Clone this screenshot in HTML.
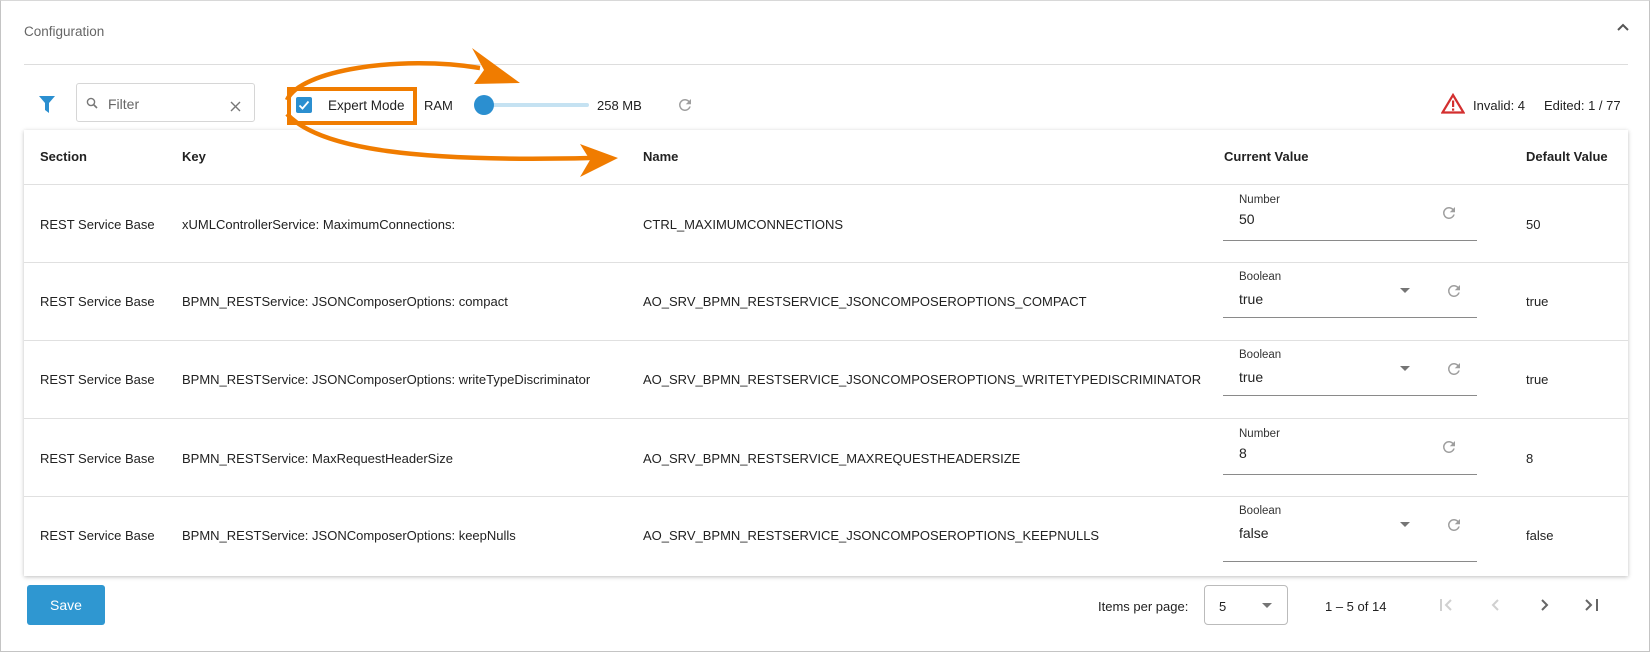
<!DOCTYPE html>
<html><head><meta charset="utf-8"><style>
*{margin:0;padding:0;box-sizing:border-box}
body{width:1650px;height:652px;background:#fff;font-family:"Liberation Sans",Arial,sans-serif;color:#222;font-size:13px;position:relative;overflow:hidden}
.frame{position:absolute;left:0;top:0;width:1650px;height:652px;border:1px solid #c4c4c4;border-top-color:#d8d8d8}
.a{position:absolute;white-space:nowrap}
.card{position:absolute;left:24px;top:130px;width:1604px;height:446px;background:#fff;box-shadow:0 1px 4px rgba(0,0,0,.25)}
.hl{position:absolute;left:24px;width:1604px;height:1px;background:#e0e0e0}
.th{font-weight:bold;top:149px}
.lbl{font-size:11.5px;color:#333}
.ul{position:absolute;left:1223px;width:254px;height:1px;background:#8a8a8a}
.tri{position:absolute;width:0;height:0;border-left:5px solid transparent;border-right:5px solid transparent;border-top:5px solid #757575}
</style></head><body>
<div class="frame"></div>
<div class="a" style="left:24px;top:24px;color:#666;font-size:13.5px">Configuration</div>
<svg class="a" style="left:1616px;top:22px" width="14" height="10"><path d="M2 8 L7 3 L12 8" stroke="#555" stroke-width="2" fill="none"/></svg>
<div class="hl" style="top:64px;background:#ddd"></div>

<svg class="a" style="left:39px;top:96px" width="16" height="17"><path d="M0 0 H16 L10 7 V17 L6 14 V7 Z" fill="#2b8fd0"/></svg>
<div class="a" style="left:76px;top:83px;width:179px;height:39px;border:1px solid #d6d6d6;border-radius:3px"></div>
<svg class="a" style="left:86px;top:97px" width="12" height="12"><circle cx="5" cy="5" r="3.6" stroke="#777" stroke-width="1.4" fill="none"/><path d="M7.5 7.5 L11 11" stroke="#777" stroke-width="1.6"/></svg>
<div class="a" style="left:108px;top:96px;color:#666;font-size:14px">Filter</div>
<svg class="a" style="left:230px;top:101px" width="11" height="11"><path d="M1 1L10 10M10 1L1 10" stroke="#777" stroke-width="1.4"/></svg>

<div class="a" style="left:287px;top:87px;width:130px;height:38px;border:4px solid #f07c00"></div>
<div class="a" style="left:296px;top:97px;width:16px;height:16px;background:#2b8fd0;border-radius:2px"></div>
<svg class="a" style="left:296px;top:97px" width="16" height="16"><path d="M3.5 8.5 L6.5 11.5 L12.5 4.5" stroke="#fff" stroke-width="1.8" fill="none"/></svg>
<div class="a" style="left:328px;top:98px;font-size:13.5px">Expert Mode</div>
<div class="a" style="left:424px;top:98px">RAM</div>
<div class="a" style="left:484px;top:103px;width:105px;height:4px;background:#c5e2f2;border-radius:2px"></div>
<div class="a" style="left:474px;top:95px;width:20px;height:20px;background:#2b8fd0;border-radius:50%"></div>
<div class="a" style="left:597px;top:98px">258 MB</div>
<svg class="a" style="left:676px;top:96px" width="18" height="18" viewBox="0 0 24 24"><path d="M17.65 6.35A7.96 7.96 0 0 0 12 4a8 8 0 1 0 7.73 10h-2.08A6 6 0 1 1 12 6c1.66 0 3.14.69 4.22 1.78L13 11h7V4z" fill="#9e9e9e"/></svg>

<svg class="a" style="left:1441px;top:93px" width="24" height="21"><path d="M12 2 L22.5 19.5 H1.5 Z" stroke="#d32f2f" stroke-width="2.2" fill="none"/><rect x="11" y="7.5" width="2.2" height="6.5" fill="#d32f2f"/><rect x="11" y="15.5" width="2.2" height="2.2" fill="#d32f2f"/></svg>
<div class="a" style="left:1473px;top:98px">Invalid: 4</div>
<div class="a" style="left:1544px;top:98px">Edited: 1 / 77</div>

<div class="card"></div>
<div class="a th" style="left:40px">Section</div>
<div class="a th" style="left:182px">Key</div>
<div class="a th" style="left:643px">Name</div>
<div class="a th" style="left:1224px">Current Value</div>
<div class="a th" style="left:1526px">Default Value</div>
<div class="hl" style="top:184px"></div>
<div class="hl" style="top:262px"></div>
<div class="hl" style="top:340px"></div>
<div class="hl" style="top:418px"></div>
<div class="hl" style="top:496px"></div>

<div class="a" style="left:40px;top:217px">REST Service Base</div>
<div class="a" style="left:182px;top:217px">xUMLControllerService: MaximumConnections:</div>
<div class="a" style="left:643px;top:217px">CTRL_MAXIMUMCONNECTIONS</div>
<div class="a lbl" style="left:1239px;top:194px">Number</div>
<div class="a" style="left:1239px;top:211px;font-size:14px">50</div>
<div class="ul" style="top:240px"></div>
<div class="a" style="left:1526px;top:217px">50</div>

<div class="a" style="left:40px;top:294px">REST Service Base</div>
<div class="a" style="left:182px;top:294px">BPMN_RESTService: JSONComposerOptions: compact</div>
<div class="a" style="left:643px;top:294px">AO_SRV_BPMN_RESTSERVICE_JSONCOMPOSEROPTIONS_COMPACT</div>
<div class="a lbl" style="left:1239px;top:271px">Boolean</div>
<div class="a" style="left:1239px;top:291px;font-size:14px">true</div>
<div class="ul" style="top:317px"></div>
<div class="a" style="left:1526px;top:294px">true</div>

<div class="a" style="left:40px;top:372px">REST Service Base</div>
<div class="a" style="left:182px;top:372px">BPMN_RESTService: JSONComposerOptions: writeTypeDiscriminator</div>
<div class="a" style="left:643px;top:372px">AO_SRV_BPMN_RESTSERVICE_JSONCOMPOSEROPTIONS_WRITETYPEDISCRIMINATOR</div>
<div class="a lbl" style="left:1239px;top:349px">Boolean</div>
<div class="a" style="left:1239px;top:369px;font-size:14px">true</div>
<div class="ul" style="top:395px"></div>
<div class="a" style="left:1526px;top:372px">true</div>

<div class="a" style="left:40px;top:451px">REST Service Base</div>
<div class="a" style="left:182px;top:451px">BPMN_RESTService: MaxRequestHeaderSize</div>
<div class="a" style="left:643px;top:451px">AO_SRV_BPMN_RESTSERVICE_MAXREQUESTHEADERSIZE</div>
<div class="a lbl" style="left:1239px;top:428px">Number</div>
<div class="a" style="left:1239px;top:445px;font-size:14px">8</div>
<div class="ul" style="top:474px"></div>
<div class="a" style="left:1526px;top:451px">8</div>

<div class="a" style="left:40px;top:528px">REST Service Base</div>
<div class="a" style="left:182px;top:528px">BPMN_RESTService: JSONComposerOptions: keepNulls</div>
<div class="a" style="left:643px;top:528px">AO_SRV_BPMN_RESTSERVICE_JSONCOMPOSEROPTIONS_KEEPNULLS</div>
<div class="a lbl" style="left:1239px;top:505px">Boolean</div>
<div class="a" style="left:1239px;top:525px;font-size:14px">false</div>
<div class="ul" style="top:561px"></div>
<div class="a" style="left:1526px;top:528px">false</div>

<div class="tri" style="left:1400px;top:288px"></div>
<div class="tri" style="left:1400px;top:366px"></div>
<div class="tri" style="left:1400px;top:522px"></div>
<svg class="a" style="left:1440px;top:204px" width="18" height="18" viewBox="0 0 24 24"><path d="M17.65 6.35A7.96 7.96 0 0 0 12 4a8 8 0 1 0 7.73 10h-2.08A6 6 0 1 1 12 6c1.66 0 3.14.69 4.22 1.78L13 11h7V4z" fill="#9e9e9e"/></svg>
<svg class="a" style="left:1445px;top:282px" width="18" height="18" viewBox="0 0 24 24"><path d="M17.65 6.35A7.96 7.96 0 0 0 12 4a8 8 0 1 0 7.73 10h-2.08A6 6 0 1 1 12 6c1.66 0 3.14.69 4.22 1.78L13 11h7V4z" fill="#9e9e9e"/></svg>
<svg class="a" style="left:1445px;top:360px" width="18" height="18" viewBox="0 0 24 24"><path d="M17.65 6.35A7.96 7.96 0 0 0 12 4a8 8 0 1 0 7.73 10h-2.08A6 6 0 1 1 12 6c1.66 0 3.14.69 4.22 1.78L13 11h7V4z" fill="#9e9e9e"/></svg>
<svg class="a" style="left:1440px;top:438px" width="18" height="18" viewBox="0 0 24 24"><path d="M17.65 6.35A7.96 7.96 0 0 0 12 4a8 8 0 1 0 7.73 10h-2.08A6 6 0 1 1 12 6c1.66 0 3.14.69 4.22 1.78L13 11h7V4z" fill="#9e9e9e"/></svg>
<svg class="a" style="left:1445px;top:516px" width="18" height="18" viewBox="0 0 24 24"><path d="M17.65 6.35A7.96 7.96 0 0 0 12 4a8 8 0 1 0 7.73 10h-2.08A6 6 0 1 1 12 6c1.66 0 3.14.69 4.22 1.78L13 11h7V4z" fill="#9e9e9e"/></svg>

<div class="a" style="left:27px;top:585px;width:78px;height:40px;background:#2f97d1;border-radius:3px;color:#fff;text-align:center;line-height:40px;font-size:14px">Save</div>
<div class="a" style="left:1098px;top:599px">Items per page:</div>
<div class="a" style="left:1204px;top:585px;width:84px;height:40px;border:1px solid #bbb;border-radius:4px"></div>
<div class="a" style="left:1219px;top:599px">5</div>
<div class="tri" style="left:1262px;top:603px"></div>
<div class="a" style="left:1325px;top:599px">1 – 5 of 14</div>
<svg class="a" style="left:1438px;top:597px" width="20" height="16"><path d="M3 2V14" stroke="#d0d0d0" stroke-width="2"/><path d="M13 3 L8 8 L13 13" stroke="#d0d0d0" stroke-width="2" fill="none"/></svg>
<svg class="a" style="left:1488px;top:597px" width="16" height="16"><path d="M10 3 L5 8 L10 13" stroke="#d0d0d0" stroke-width="2" fill="none"/></svg>
<svg class="a" style="left:1536px;top:597px" width="16" height="16"><path d="M6 3 L11 8 L6 13" stroke="#666" stroke-width="2" fill="none"/></svg>
<svg class="a" style="left:1582px;top:597px" width="20" height="16"><path d="M4 3 L9 8 L4 13" stroke="#666" stroke-width="2" fill="none"/><path d="M15 2V14" stroke="#666" stroke-width="2"/></svg>

<svg class="a" style="left:0;top:0" width="700" height="200">
<path d="M287 100 C 300 70, 400 55, 480 68" stroke="#f07c00" stroke-width="4.5" fill="none"/>
<path d="M472 48 L520 83 L474 84 L484 70 Z" fill="#f07c00"/>
<path d="M287 114 C 320 150, 420 162, 590 158" stroke="#f07c00" stroke-width="4.5" fill="none"/>
<path d="M580 144 L618 158 L580 177 L590 160 Z" fill="#f07c00"/>
</svg>
</body></html>
